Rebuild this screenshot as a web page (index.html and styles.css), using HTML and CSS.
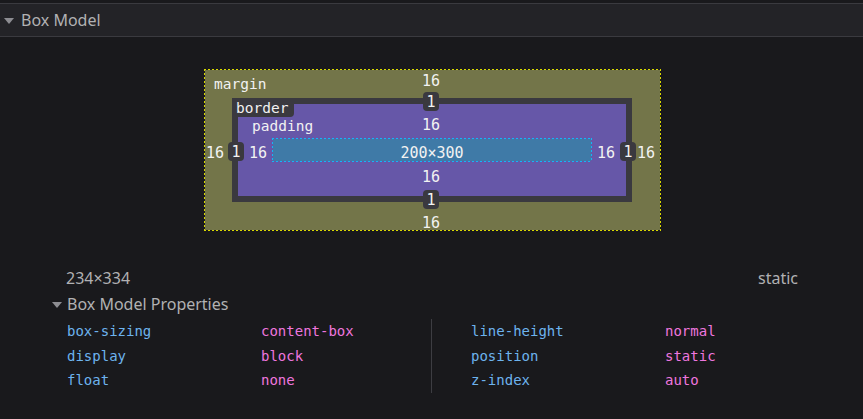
FILE: index.html
```html
<!DOCTYPE html>
<html>
<head>
<meta charset="utf-8">
<link rel="stylesheet" href="styles.css">
</head>
<body>
<div class="topstrip"></div>
<div class="header"><span class="twisty"></span><span class="header-title">Box Model</span></div>

<div class="bm-wrap">
  <div class="margin-box">
    <span class="bm-label lbl-margin">margin</span>
    <span class="bm-val m-top">16</span>
    <span class="bm-badge b-top">1</span>
    <span class="bm-val p-top">16</span>
    <span class="bm-val m-left">16</span>
    <span class="bm-badge b-left">1</span>
    <span class="bm-val p-left">16</span>
    <span class="bm-val p-right">16</span>
    <span class="bm-badge b-right">1</span>
    <span class="bm-val m-right">16</span>
    <span class="bm-val p-bottom">16</span>
    <span class="bm-badge b-bottom">1</span>
    <span class="bm-val m-bottom">16</span>
    <div class="border-box">
      <span class="border-label">border</span>
      <div class="padding-box">
        <span class="bm-label lbl-padding">padding</span>
        <div class="content-box">200×300</div>
      </div>
    </div>
  </div>
</div>

<div class="info-row">
  <span>234×334</span>
  <span>static</span>
</div>

<div class="section-head"><span class="twisty small"></span><span>Box Model Properties</span></div>

<div class="props">
  <div class="prop-col">
    <div class="prop-row"><span class="prop-name">box-sizing</span><span class="prop-value">content-box</span></div>
    <div class="prop-row"><span class="prop-name">display</span><span class="prop-value">block</span></div>
    <div class="prop-row"><span class="prop-name">float</span><span class="prop-value">none</span></div>
  </div>
  <div class="prop-col right">
    <div class="prop-row"><span class="prop-name">line-height</span><span class="prop-value">normal</span></div>
    <div class="prop-row"><span class="prop-name">position</span><span class="prop-value">static</span></div>
    <div class="prop-row"><span class="prop-name">z-index</span><span class="prop-value">auto</span></div>
  </div>
</div>
</body>
</html>
```

FILE: styles.css
```css
html, body {
  margin: 0;
  padding: 0;
  background: #19191c;
  width: 863px;
  height: 419px;
  overflow: hidden;
}

body {
  font-family: "Noto Sans", "Open Sans", sans-serif;
  color: #b1b1b3;
}

.topstrip {
  height: 3px;
  background: #19191c;
}

.header {
  height: 32px;
  background: #232327;
  border-top: 1px solid #3a3a3f;
  border-bottom: 1px solid #3a3a3f;
  display: flex;
  align-items: center;
  padding-left: 4px;
  font-size: 16px;
  line-height: 32px;
}

.twisty {
  width: 0;
  height: 0;
  border-left: 5.5px solid transparent;
  border-right: 5.5px solid transparent;
  border-top: 6px solid #8d8d92;
  margin-right: 7px;
  margin-top: 1px;
}

.twisty.small {
  border-left-width: 5px;
  border-right-width: 5px;
  border-top-width: 6px;
  margin-right: 5px;
  margin-top: 2px;
}

.header-title {
  color: #b1b1b3;
}

/* ---------- box model diagram ---------- */
.bm-wrap {
  display: flex;
  justify-content: center;
  padding: 32px 0 0 2px;
}

.margin-box {
  position: relative;
  border: 1px solid transparent;
  padding: 28px 28px 28px 27px;
  background:
    repeating-linear-gradient(90deg, #d8d800 0 2px, transparent 2px 4px) left top / 100% 1px no-repeat,
    repeating-linear-gradient(90deg, #d8d800 0 2px, transparent 2px 4px) left bottom / 100% 1px no-repeat,
    repeating-linear-gradient(180deg, #d8d800 0 2px, transparent 2px 4px) left top / 1px 100% no-repeat,
    repeating-linear-gradient(180deg, #d8d800 0 2px, transparent 2px 4px) right top / 1px 100% no-repeat,
    linear-gradient(#737549, #737549);
  background-origin: border-box;
  background-clip: border-box, border-box, border-box, border-box, padding-box;
  font-family: "DejaVu Sans Mono", monospace;
  font-size: 15px;
  color: #f2f2f2;
}

.border-box {
  position: relative;
  width: 388px;
  height: 92px;
  border: 6px solid #3a393f;
}

.padding-box {
  position: relative;
  height: 92px;
  box-sizing: border-box;
  padding: 34px;
  background: #6657a8;
}

.content-box {
  height: 24px;
  box-sizing: border-box;
  border: 1px solid transparent;
  background:
    repeating-linear-gradient(90deg, #14b6f6 0 2px, transparent 2px 4px) left top / 100% 1px no-repeat,
    repeating-linear-gradient(90deg, #14b6f6 0 2px, transparent 2px 4px) left bottom / 100% 1px no-repeat,
    repeating-linear-gradient(180deg, #14b6f6 0 2px, transparent 2px 4px) left top / 1px 100% no-repeat,
    repeating-linear-gradient(180deg, #14b6f6 0 2px, transparent 2px 4px) right top / 1px 100% no-repeat,
    linear-gradient(#3f7aa7, #3f7aa7);
  background-origin: border-box;
  background-clip: border-box, border-box, border-box, border-box, padding-box;
  text-align: center;
  line-height: 28px;
  overflow: visible;
  color: #f2f2f2;
}

.bm-label,
.bm-val {
  position: absolute;
  line-height: 18px;
  white-space: nowrap;
  z-index: 2;
}

.bm-label {
  font-size: 14.5px;
}

.lbl-margin { left: 9px; top: 5px; }
.lbl-padding { left: 14px; top: 13px; }

.bm-val.m-top { left: 216px; width: 20px; text-align: center; top: 2px; }
.bm-val.p-top { left: 216px; width: 20px; text-align: center; top: 46px; }
.bm-val.p-bottom { left: 216px; width: 20px; text-align: center; top: 98px; }
.bm-val.m-bottom { left: 216px; width: 20px; text-align: center; top: 144px; }

.bm-val.m-left { left: 1px; top: 74px; }
.bm-val.p-left { left: 44px; top: 74px; }
.bm-val.p-right { left: 392px; top: 74px; }
.bm-val.m-right { left: 432px; top: 74px; }

.bm-badge {
  position: absolute;
  width: 16px;
  height: 19px;
  line-height: 20px;
  text-align: center;
  background: #3a393f;
  border-radius: 4px;
  color: #f2f2f2;
  z-index: 3;
}

.b-top { left: 218px; top: 22px; }
.b-bottom { left: 218px; top: 120px; }
.b-left { left: 23px; top: 72px; }
.b-right { left: 415px; top: 72px; }

.border-label {
  position: absolute;
  left: -6px;
  top: -6px;
  width: 58px;
  height: 19px;
  padding-left: 4px;
  line-height: 20px;
  font-size: 14.5px;
  background: #3a393f;
  border-bottom-right-radius: 4px;
  color: #f2f2f2;
  z-index: 3;
}

/* ---------- info row ---------- */
.info-row {
  display: flex;
  justify-content: space-between;
  margin-top: 37px;
  padding: 0 65px 0 66px;
  height: 20px;
  line-height: 20px;
  font-size: 16px;
  color: #b1b1b3;
}

.section-head {
  display: flex;
  align-items: center;
  margin-top: 6px;
  padding-left: 52px;
  height: 20px;
  line-height: 20px;
  font-size: 16px;
  color: #b1b1b3;
}

/* ---------- properties ---------- */
.props {
  display: flex;
  margin-top: 5px;
  padding-left: 28px;
  font-family: "DejaVu Sans Mono", monospace;
  font-size: 14px;
}

.prop-col {
  width: 364px;
  padding-left: 39px;
}

.prop-col.right {
  border-left: 1px solid #3d3d42;
}

.prop-row {
  display: grid;
  grid-template-columns: 194px 1fr;
  height: 24.5px;
  line-height: 24.5px;
}

.prop-name { color: #6db3ee; }
.prop-value { color: #ee76df; }
```
